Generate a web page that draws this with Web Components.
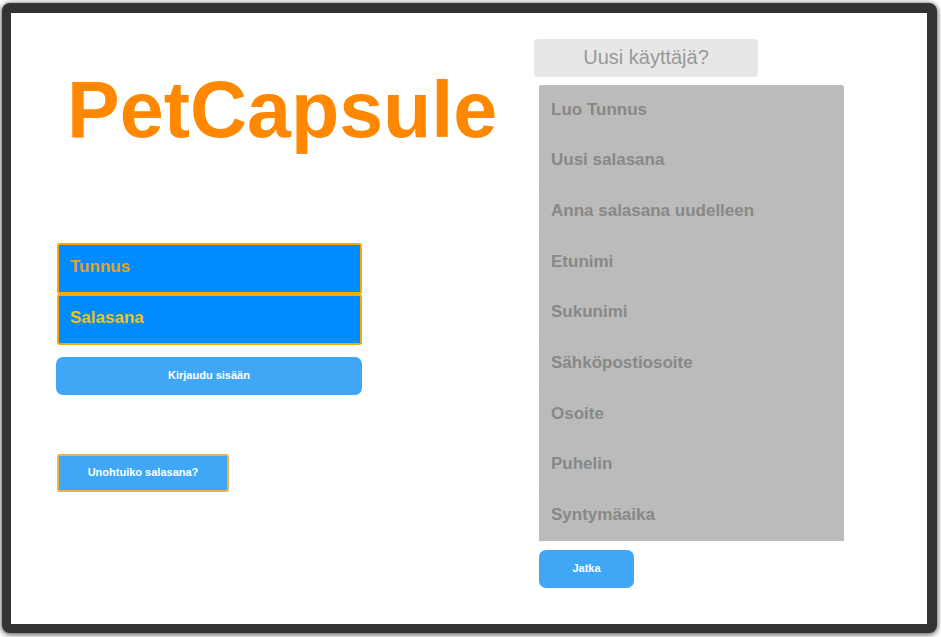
<!DOCTYPE html>
<html lang="fi">
<head>
<meta charset="utf-8">
<title>PetCapsule</title>
<style>
html { height: 100%; }
body { margin: 0; min-height: 100%; box-sizing: border-box; display: flex; background: #fff; font-family: "Liberation Sans", Arial, sans-serif; padding: 3px 4px 4px 2px; }
</style>
</head>
<body>
<pet-frame>
  <pet-login slot="login"></pet-login>
  <pet-signup slot="signup"></pet-signup>
</pet-frame>
<script>
const define = (name, html, setup) => customElements.define(name, class extends HTMLElement {
  connectedCallback() {
    if (this.shadowRoot) return;
    this.attachShadow({ mode: "open" }).innerHTML = html;
    if (setup) setup(this, this.shadowRoot);
  }
});

define("pet-frame", `
<style>
:host { flex: 1; box-sizing: border-box; display: grid; grid-template-columns: minmax(0, 478fr) minmax(0, 393fr); padding-left: 45px;
  background: #fff; border: 9px solid #333; border-right-width: 10px; border-top-width: 10px; border-radius: 8px; box-shadow: 0 1px 5px 1px rgba(0,0,0,.6); }
</style>
<slot name="login"></slot><slot name="signup"></slot>`);

define("pet-field", `
<style>
:host { display: grid; }
input { box-sizing: border-box; width: 100%; height: 100%; margin: 0; padding: 0 11px var(--drop, 1px); outline: 0; border: var(--edge, 1px solid #bdbdbd);
  border-radius: 3px; background: var(--fill, #bbb); color: var(--ink, #888); font: bold 17px "Liberation Sans", Arial, sans-serif; }
input::placeholder { color: inherit; opacity: 1; }
</style>
<input>`, (host, root) => {
  const input = root.querySelector("input");
  input.type = host.getAttribute("type") || "text";
  input.placeholder = host.getAttribute("label");
  input.setAttribute("aria-label", host.getAttribute("label"));
});

define("pet-button", `
<style>
:host { display: grid; }
button { height: 38px; margin: 0; padding: 0 8px 2px; border: var(--edge, 0); border-radius: var(--round, 7px); background: #40a7f6; color: #fff;
  font: bold 11px "Liberation Sans", Arial, sans-serif; }
</style>
<button type="button"><slot></slot></button>`);

define("pet-login", `
<style>
:host { display: block; padding-top: 51px; }
h1 { margin: 0 0 87px 11px; font-size: 79px; line-height: 92px; color: #ff8800; }
.fields { display: grid; grid-auto-rows: 1fr; min-height: 102px; max-width: 305px; margin-left: 1px;
  --edge: 2px solid #ffa500; --fill: #008cff; --drop: 3px; }
.first { --ink: #e8a020; }
.second { --ink: #eec310; }
.enter { max-width: 306px; margin-top: 12px; }
.forgot { max-width: 172px; margin: 59px 0 0 1px; --edge: 2px solid #eeb04a; --round: 3px; }
</style>
<h1>PetCapsule</h1>
<div class="fields">
  <pet-field class="first" label="Tunnus"></pet-field>
  <pet-field class="second" label="Salasana" type="password"></pet-field>
</div>
<pet-button class="enter">Kirjaudu sisään</pet-button>
<pet-button class="forgot">Unohtuiko salasana?</pet-button>`);

define("pet-signup", `
<style>
:host { display: block; padding-top: 26px; }
h2 { max-width: 224px; margin: 0; padding-bottom: 2px; border-radius: 4px; background: #e7e7e7; color: #999; font-size: 20px; font-weight: 400; line-height: 36px; text-align: center; }
.fields { display: grid; grid-auto-rows: 1fr; min-height: 456px; max-width: 305px; margin: 8px 0 0 5px; background: #bbb; border-radius: 3px 3px 0 0; }
.next { max-width: 95px; margin: 9px 0 0 5px; }
</style>
<h2>Uusi käyttäjä?</h2>
<div class="fields">
  <pet-field label="Luo Tunnus"></pet-field>
  <pet-field label="Uusi salasana" type="password"></pet-field>
  <pet-field label="Anna salasana uudelleen" type="password"></pet-field>
  <pet-field label="Etunimi"></pet-field>
  <pet-field label="Sukunimi"></pet-field>
  <pet-field label="Sähköpostiosoite" type="email"></pet-field>
  <pet-field label="Osoite"></pet-field>
  <pet-field label="Puhelin" type="tel"></pet-field>
  <pet-field label="Syntymäaika"></pet-field>
</div>
<pet-button class="next">Jatka</pet-button>`);
</script>
</body>
</html>
